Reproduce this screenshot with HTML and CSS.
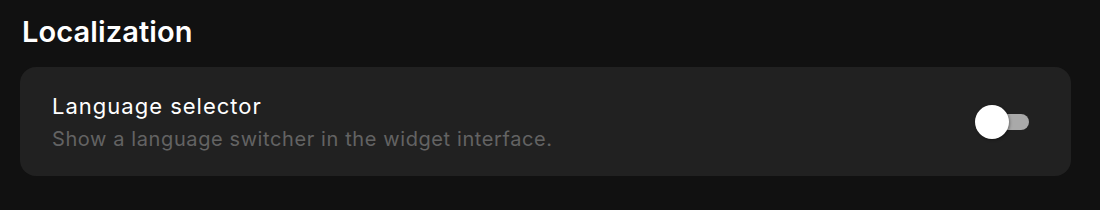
FILE: index.html
```html
<!DOCTYPE html>
<html lang="en">
  <head>
    <meta charset="UTF-8" />
    <meta name="viewport" content="width=device-width, initial-scale=1.0" />
    <title>Localization</title>
    <link rel="stylesheet" href="styles.css">
  </head>
  <body>
    <section class="settings-group">
      <h2 class="group-title">Localization</h2>

      <div class="setting-card">
        <div class="setting-text">
          <div class="setting-name">Language selector</div>
          <div class="setting-desc">Show a language switcher in the widget interface.</div>
        </div>
        <div class="toggle" role="switch" aria-checked="false">
          <span class="toggle-track"></span>
          <span class="toggle-knob"></span>
        </div>
      </div>
    </section>
  </body>
</html>
```

FILE: styles.css
```css
body {
  margin: 0;
  background-color: #111111;
  font-family: Inter, "Noto Sans", sans-serif;
  color: white;
}

.settings-group {
  padding: 14px 29px 0 20px;
}

.group-title {
  margin: 0 0 17px 2px;
  font-size: 29px;
  font-weight: 600;
  line-height: 36px;
  letter-spacing: 0.1px;
}

.setting-card {
  display: flex;
  align-items: center;
  justify-content: space-between;
  height: 109px;
  padding: 0 42px 0 32px;
  box-sizing: border-box;
  background-color: #212121;
  border-radius: 16px;
}

.setting-name {
  font-size: 22px;
  font-weight: 400;
  line-height: 28px;
  letter-spacing: 1px;
}

.setting-desc {
  margin-top: 6px;
  font-size: 20px;
  line-height: 26px;
  letter-spacing: 0.6px;
  color: #636363;
}

.toggle {
  position: relative;
  width: 54px;
  height: 34px;
}

.toggle-track {
  position: absolute;
  left: 4px;
  right: 0;
  top: 9px;
  height: 16px;
  border-radius: 8px;
  background-color: #a9a9a9;
}

.toggle-knob {
  position: absolute;
  left: 0;
  top: 0;
  width: 34px;
  height: 34px;
  border-radius: 50%;
  background-color: white;
  box-shadow: 1px 1px 3px rgba(0, 0, 0, 0.35);
}
```
